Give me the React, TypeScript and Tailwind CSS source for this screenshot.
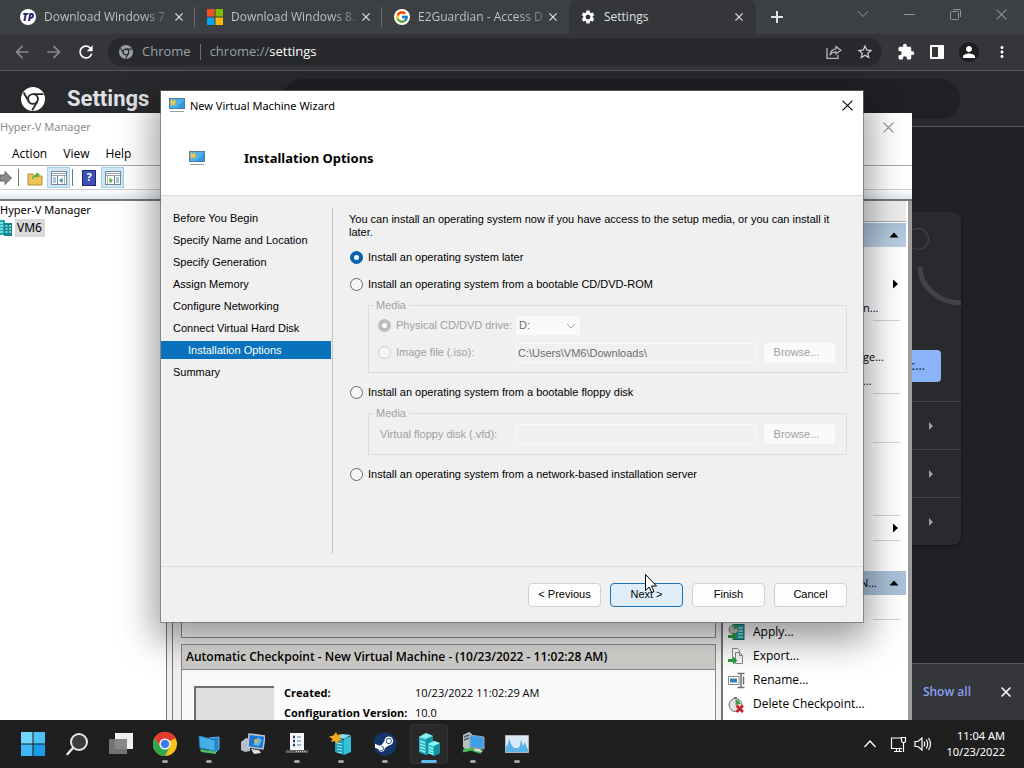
import React from "react";
import { FcGoogle } from "react-icons/fc";
import { FaSteam } from "react-icons/fa";
import {
  MdArrowBack,
  MdArrowForward,
  MdExtension,
  MdMoreVert,
  MdPerson,
  MdRefresh,
  MdSettings,
  MdStarBorder,
} from "react-icons/md";

type IconProps = { className?: string };

const Cross = ({ className }: IconProps) => (
  <svg viewBox="0 0 10 10" className={className} fill="none" stroke="currentColor" aria-hidden="true">
    <path d="M0.5 0.5 9.5 9.5M9.5 0.5 0.5 9.5" />
  </svg>
);

const ChromeMono = ({ className }: IconProps) => (
  <svg viewBox="0 0 24 24" className={className} aria-hidden="true">
    <circle cx="12" cy="12" r="12" fill="currentColor" />
    <circle cx="12" cy="12" r="4.9" fill="none" stroke="#292a2d" strokeWidth="1.9" />
    <path d="M12 7.1H22.4M7.8 14.5 2.6 5.6M16.2 14.5 11.2 23.4" stroke="#292a2d" strokeWidth="1.9" fill="none" />
  </svg>
);

const ChromeColor = ({ className }: IconProps) => (
  <svg viewBox="0 0 24 24" className={className} aria-hidden="true">
    <circle cx="12" cy="12" r="12" fill="#fbc116" />
    <path d="M12 12 1.6 6A12 12 0 0 1 22.4 6Z" fill="#e33b2e" />
    <path d="M12 6.5H22.7A12 12 0 0 0 1.6 6L7.2 14.7Z" fill="#e33b2e" />
    <path d="M1.6 6A12 12 0 0 0 12 24L16.8 14.8 12 12 7.2 14.8Z" fill="#2da94f" />
    <circle cx="12" cy="12" r="5.6" fill="#fff" />
    <circle cx="12" cy="12" r="4.3" fill="#3a7cec" />
  </svg>
);

const MonitorIcon = ({ className }: IconProps) => (
  <svg viewBox="0 0 16 15" className={className} aria-hidden="true">
    <rect x="0.5" y="0.5" width="15" height="10" fill="#4bb0ec" stroke="#4b7ea0" />
    <path d="M8 10 15 2V10Z" fill="#2f98e0" />
    <path d="M2 1 4 3 6 1 6 3.5 8 4 6 5.5 6.5 8 4 6.5 1.5 8 2 5 0.5 3.5 2 3.2Z" fill="#f3c544" />
    <path d="M1 13.5H15" stroke="#9aa3a8" />
  </svg>
);

const ShareIcon = ({ className }: IconProps) => (
  <svg viewBox="0 0 16 16" className={className} fill="none" stroke="currentColor" strokeWidth="1.3" aria-hidden="true">
    <path d="M1 4V14.3H12V11" />
    <path d="M10 2.5 14.8 6.3 10 10V7.8C7.500 7.700 5.300 8.800 4 11.300 4.300 7.500 6.500 5.100 10 4.800Z" />
  </svg>
);

const tabs = [
  { title: "Download Windows 7", icon: "tp" },
  { title: "Download Windows 8.", icon: "ms" },
  { title: "E2Guardian - Access D", icon: "google" },
];

const TabIcon = ({ kind }: { kind: string }) => {
  if (kind === "tp")
    return (
      <span className="flex size-4 shrink-0 items-center justify-center rounded-full bg-white text-[10px] font-black italic text-[#1d2470]">
        TP
      </span>
    );
  if (kind === "ms")
    return (
      <svg viewBox="0 0 16 16" className="size-4 shrink-0" aria-hidden="true">
        <path d="M0 0H7.500V7.500H0Z" fill="#f25022" />
        <path d="M8.500 0H16V7.500H8.500Z" fill="#7fba00" />
        <path d="M0 8.500H7.500V16H0Z" fill="#00a4ef" />
        <path d="M8.500 8.500H16V16H8.500Z" fill="#ffb900" />
      </svg>
    );
  return (
    <span className="flex size-4 shrink-0 items-center justify-center rounded-full bg-white">
      <FcGoogle className="size-3.5" />
    </span>
  );
};

function Browser() {
  return (
    <section aria-label="Browser" className="absolute inset-0 flex flex-col bg-[#202124] font-['Open_Sans',sans-serif] text-[#dfe1e5]">
      <div className="flex h-[34px] shrink-0 items-stretch bg-[#3c4043] pl-2 text-[12px]">
        {tabs.map((t) => (
          <div key={t.title} className="flex w-[187px] items-center">
            <div className="flex min-w-0 flex-1 items-center gap-2 pl-3">
              <TabIcon kind={t.icon} />
              <span className="whitespace-nowrap bg-[linear-gradient(to_right,#c5c8cc_80%,#6b6f74)] bg-clip-text text-transparent">
                {t.title}
              </span>
            </div>
            <button aria-label="Close tab" className="mr-[9px] p-0.5">
              <Cross className="size-2 stroke-[1.500]" />
            </button>
            <span className={t.icon === "google" ? "h-5 w-px" : "h-5 w-px bg-[#6b6f74]"} />
          </div>
        ))}
        <div className="flex w-[187px] items-center rounded-t-lg bg-[#35363a] pl-[11px]">
          <MdSettings className="mr-2 size-4 text-white" />
          <span className="flex-1">Settings</span>
          <button aria-label="Close tab" className="mr-[11px] p-0.5">
            <Cross className="size-2 stroke-[1.500]" />
          </button>
        </div>
        <button aria-label="New tab" className="flex w-[42px] items-center justify-center">
          <svg viewBox="0 0 12 12" className="size-3" stroke="currentColor" strokeWidth="2" aria-hidden="true">
            <path d="M6 0V12M0 6H12" />
          </svg>
        </button>
        <div className="ml-auto flex h-7 text-[#8f9397]">
          <button aria-label="Search tabs" className="flex w-[46px] items-center justify-center">
            <svg viewBox="0 0 12 8" className="w-3" fill="none" stroke="currentColor" aria-hidden="true">
              <path d="M1 1 6 6.500 11 1" />
            </svg>
          </button>
          <button aria-label="Minimize" className="flex w-[46px] items-center justify-center">
            <span className="h-px w-[11px] bg-[#8f9397]" />
          </button>
          <button aria-label="Restore" className="flex w-[46px] items-center justify-center">
            <svg viewBox="0 0 11 11" className="size-[11px]" fill="none" stroke="currentColor" aria-hidden="true">
              <rect x="0.500" y="2.500" width="8" height="8" rx="1" />
              <path d="M3 0.500H9A1.500 1.500 0 0 1 10.500 2V8" />
            </svg>
          </button>
          <button aria-label="Close" className="flex w-[46px] items-center justify-center">
            <Cross className="size-[11px]" />
          </button>
        </div>
      </div>
      <div className="flex h-9 shrink-0 items-center bg-[#35363a] pr-[13px]">
        <div className="flex w-[108px] items-center gap-3 pl-3">
          <button aria-label="Back"><MdArrowBack className="size-5 text-[#85888c]" /></button>
          <button aria-label="Forward"><MdArrowForward className="size-5 text-[#85888c]" /></button>
          <button aria-label="Reload"><MdRefresh className="size-5 text-white" /></button>
        </div>
        <div className="flex h-7 flex-1 items-center rounded-full bg-[#28292c] pl-[11px] pr-2 text-[13px] text-[#9aa0a6]">
          <ChromeMono className="size-3.5" />
          <span className="ml-[9px]">Chrome</span>
          <span className="mx-[9px] h-4 w-px bg-[#6b6f74]" />
          <span className="flex-1">
            chrome://<span className="text-white">settings</span>
          </span>
          <button aria-label="Share"><ShareIcon className="size-4 text-[#b4b8bc]" /></button>
          <button aria-label="Bookmark" className="ml-3.5"><MdStarBorder className="size-[18px] text-[#d0d3d7]" /></button>
        </div>
        <div className="ml-[15px] flex items-center gap-3.5 text-white">
          <button aria-label="Extensions"><MdExtension className="size-[18px]" /></button>
          <button aria-label="Side panel">
            <svg viewBox="0 0 16 16" className="size-4" aria-hidden="true">
              <path d="M1 1H15V15H1ZM3 3V13H9V3Z" fill="currentColor" fillRule="evenodd" />
            </svg>
          </button>
          <button aria-label="Profile" className="flex size-5 items-center justify-center rounded-full bg-[#1d1e20]">
            <MdPerson className="size-[18px]" />
          </button>
          <button aria-label="Menu"><MdMoreVert className="size-[18px]" /></button>
        </div>
      </div>
      <header className="flex h-[57px] shrink-0 items-center border-y border-[#56585b] bg-[#292a2d] pl-[21px] pr-16">
        <ChromeMono className="size-6 text-white" />
        <h1 className="ml-[22px] w-[216px] font-['Roboto',sans-serif] text-[22px] font-bold">Settings</h1>
        <div className="h-10 flex-1 rounded-full bg-[#202124]" />
      </header>
      <main className="flex flex-1 flex-col items-end pr-[63px] pt-[85px]">
        <div className="w-80 rounded-lg bg-[#292a2d] shadow-[0_1px_3px_rgba(0,0,0,0.5)]">
          <div className="flex h-[189px] flex-col items-end overflow-hidden">
            <svg viewBox="0 0 50 100" className="h-[100px] w-[50px] shrink-0" fill="none" aria-hidden="true">
              <circle cx="7" cy="27" r="10.500" stroke="#4b4c4f" strokeWidth="1" />
              <path d="M9 55A42 36 0 0 0 50 91" stroke="#414345" strokeWidth="5" />
            </svg>
            <button className="mr-5 mt-[38px] h-8 w-24 shrink-0 rounded bg-[#8ab4f8] pr-4 text-right text-[12px] font-semibold text-[#28406b]">c...</button>
          </div>
          {["passwords", "browsing", "extensions"].map((k) => (
            <div key={k} className="flex h-12 items-center justify-end border-t border-[#46474a] pr-7">
              <svg viewBox="0 0 4 8" className="h-2 w-1" fill="#9aa0a6" aria-hidden="true">
                <path d="M0 0 4 4 0 8Z" />
              </svg>
            </div>
          ))}
        </div>
      </main>
      <footer className="flex h-[57px] shrink-0 items-center justify-end border-t border-[#56585b] bg-[#35363a] pr-[13px]">
        <a href="#downloads" className="text-[12px] font-semibold text-[#8a9ff0]">Show all</a>
        <button aria-label="Close downloads" className="ml-[30px]"><Cross className="size-[10px] stroke-[1.500] text-white" /></button>
      </footer>
    </section>
  );
}

const PaneIcon = ({ flip }: { flip?: boolean }) => (
  <svg viewBox="0 0 16 14" className={flip ? "h-3.5 w-4 -scale-x-100" : "h-3.5 w-4"} fill="none" aria-hidden="true">
    <rect x="0.500" y="0.500" width="15" height="13" fill="#fff" stroke="#7b8791" />
    <path d="M1 2.500H15M1 4.500H15" stroke="#97a3ad" />
    <path d="M6.500 5V13M2 7H5M2 9H5M2 11H5" stroke="#5b86a8" />
    <path d="M11.500 6.500V12.500L8 9.500Z" fill={flip ? "#5cae2c" : "#4d8aa0"} />
    <path d="M13.500 5V13" stroke="#a9b4bc" />
  </svg>
);

const ServerIcon = ({ className }: IconProps) => (
  <svg viewBox="0 0 16 16" className={className} aria-hidden="true">
    <path d="M0 0H9V15H0Z" fill="#22a7ac" />
    <path d="M8 3H16V16H8Z" fill="#17858e" />
    <path d="M1 3H7M1 6H7M1 9H7M1 12H7M9.500 6H11.500M13 6H15M9.500 9H11.500M13 9H15M9.500 12H11.500M13 12H15" stroke="#8ff0ee" strokeWidth="1.500" />
  </svg>
);

const Triangle = ({ dir }: { dir: "up" | "right" }) => (
  <svg viewBox="0 0 10 10" className="size-2.5" aria-hidden="true">
    <path d={dir === "up" ? "M0.500 7.500 5 2.500 9.500 7.500Z" : "M3 0.500 8 5 3 9.500Z"} fill="#000" />
  </svg>
);

const GreenArrow = () => <path d="M0 11H5V8.500L9.500 12.500 5 16.500V14H0Z" fill="#27a03c" />;

const ActionIcon = ({ kind }: { kind: string }) => (
  <svg viewBox="0 0 17 17" className="size-[17px]" fill="none" aria-hidden="true">
    {kind === "apply" && (
      <>
        <rect x="5" y="0.500" width="11" height="15" fill="#1c9aa0" stroke="#157078" />
        <path d="M10 4H15M10 7H15M10 10H15M10 13H15" stroke="#8fe4e4" strokeWidth="1.500" />
        <circle cx="5.500" cy="5.500" r="4.500" fill="#c4c9c6" stroke="#777" />
        <path d="M5.500 5.500V1A4.500 4.500 0 0 1 9.500 4.500Z" fill="#39a14b" />
        <GreenArrow />
      </>
    )}
    {kind === "export" && (
      <>
        <path d="M4.500 12V0.500H9.500L11.500 2.500V5" stroke="#8a8a8a" />
        <path d="M7.500 4.500H11.500L14.500 7.500V15.500H7.500Z" fill="#f7f7f7" stroke="#8a8a8a" />
        <path d="M11.500 4.500V7.500H14.500" stroke="#8a8a8a" />
        <GreenArrow />
      </>
    )}
    {kind === "rename" && (
      <>
        <path d="M0.500 4.500H11V12.500H0.500Z" fill="#fff" stroke="#7d8a94" />
        <path d="M2 6.500H9V10.500H2Z" fill="#3580b8" />
        <path d="M13 1.500V15.500M9.500 1.500H16.500M9.500 15.500H16.500M15.500 4.500V12.500" stroke="#6f6f6f" strokeWidth="1.500" />
      </>
    )}
    {kind === "delete" && (
      <>
        <circle cx="7.500" cy="9" r="6.500" fill="#e2e2e2" stroke="#6e6e6e" />
        <path d="M6 1H9V3H6Z" fill="#777" />
        <path d="M7.500 9V3.500A5.500 5.500 0 0 1 12.500 8Z" fill="#39a14b" />
        <path d="M8.500 9.500 15 16M15 9.500 8.500 16" stroke="#c41e24" strokeWidth="2.500" />
      </>
    )}
  </svg>
);

const actions = [
  { kind: "apply", label: "Apply..." },
  { kind: "export", label: "Export..." },
  { kind: "rename", label: "Rename..." },
  { kind: "delete", label: "Delete Checkpoint..." },
];

const Rule = () => <div className="ml-[150px] mr-1.5 h-px shrink-0 bg-[#d4d4d4]" />;

const Fragment = ({ text, arrow }: { text?: string; arrow?: boolean }) => (
  <div className="flex h-6 shrink-0 items-center pl-[140px] pr-1.5 text-[11px]">
    <span className="flex-1">{text}</span>
    {arrow && <Triangle dir="right" />}
  </div>
);

function HyperV() {
  return (
    <section
      aria-label="Hyper-V Manager"
      className="absolute bottom-0 left-0 top-[113px] flex w-[912px] flex-col overflow-hidden bg-white font-['Noto_Sans',sans-serif] text-[11px] text-black"
    >
      <div className="flex h-[29px] shrink-0 items-center justify-between pr-[18px] text-[#8c8c8c]">
        <span>Hyper-V Manager</span>
        <button aria-label="Close"><Cross className="size-[11px]" /></button>
      </div>
      <nav className="flex h-6 shrink-0 items-center gap-4 border-b border-[#a8a8a8] pl-3 font-['Open_Sans',sans-serif] text-[12px]">
        <button>Action</button>
        <button>View</button>
        <button>Help</button>
      </nav>
      <div className="flex h-6 shrink-0 items-center border-b border-[#c9ccd0]">
        <svg viewBox="0 0 12 14" className="h-3.5 w-3" aria-hidden="true">
          <path d="M0 4H5V0.500L11.500 7 5 13.500V10H0Z" fill="#8a8a8a" stroke="#666" />
        </svg>
        <span className="ml-1.5 h-[17px] w-px bg-[#777]" />
        <button aria-label="Up" className="ml-2">
          <svg viewBox="0 0 16 16" className="size-4" aria-hidden="true">
            <path d="M1 4H6L8 6H15V15H1Z" fill="#ecc458" stroke="#b58f33" />
            <path d="M5 10C5 6 7 5 9 4.500V2.500L13 4.500 9 8V6.500C7 7 6 8 5 10Z" fill="#54a93a" />
          </svg>
        </button>
        <button aria-label="Tree" className="ml-1 flex h-[21px] w-[23px] items-center justify-center border border-[#9fd0f0] bg-[#cfe6f7]"><PaneIcon /></button>
        <span className="ml-0.5 h-[17px] w-px bg-[#777]" />
        <button aria-label="Help" className="ml-[9px] flex h-4 w-3.5 items-center justify-center border border-[#1c2a73] bg-[#3d50b4] font-bold text-white">?</button>
        <button aria-label="Actions" className="ml-[5px] flex h-[21px] w-[23px] items-center justify-center border border-[#9fd0f0] bg-[#cfe6f7]"><PaneIcon flip /></button>
      </div>
      <div className="h-[9px] shrink-0 bg-[linear-gradient(#fff,#dfe6ee)]" />
      <div className="flex min-h-0 flex-1 border-t-2 border-[#75777c] bg-[#f0f0f0]">
        <div className="w-[167px] shrink-0 border-r border-[#777] bg-white">
          <div className="flex h-[18px] items-center">Hyper-V Manager</div>
          <div className="flex h-[18px] items-center text-[12px]">
            <ServerIcon className="-ml-1 mr-[3px] size-4" />
            <span className="flex h-[18px] items-center bg-[#d9d9d9] pl-0.5 pr-[3px]">VM6</span>
          </div>
        </div>
        <div className="ml-[5px] flex min-w-0 flex-1 flex-col border-l border-[#777] px-2 pr-[5px]">
          <div className="h-[437px] shrink-0 border border-[#8b8b8b] bg-[#fafafa]" />
          <div className="mt-1.5 flex flex-1 flex-col border border-[#8b8b8b] bg-[#fafafa]">
            <h2 className="flex h-[25px] shrink-0 items-center border-b border-[#8b8b8b] bg-[linear-gradient(#e2e2e0,#c9c8c4)] pl-1 font-['Open_Sans',sans-serif] text-[12px] font-semibold">
              Automatic Checkpoint - New Virtual Machine - (10/23/2022 - 11:02:28 AM)
            </h2>
            <div className="flex min-h-0 flex-1 overflow-hidden pl-3 pt-4">
              <div className="w-20 shrink-0 border-l-2 border-t-2 border-[#6e6e6e] bg-[#dedede]" />
              <dl className="-mt-[3px] ml-2.5 grid h-10 grid-cols-[131px_auto] font-['Open_Sans',sans-serif] leading-5">
                <dt className="font-bold">Created:</dt>
                <dd>10/23/2022 11:02:29 AM</dd>
                <dt className="font-bold">Configuration Version:</dt>
                <dd>10.0</dd>
              </dl>
            </div>
          </div>
        </div>
        <aside className="flex w-[187px] shrink-0 flex-col border-l-2 border-[#777] bg-white pr-0.5 font-['Open_Sans',sans-serif] text-[12px]">
          <div className="h-[21px] shrink-0 border-b border-[#aaa] bg-[#ececec]" />
          <div className="mt-px flex h-6 shrink-0 items-center justify-end bg-[linear-gradient(#a9c1d9,#bccfe2)] pr-[7px]"><Triangle dir="up" /></div>
          <div className="h-px" />
          <Fragment />
          <Fragment arrow />
          <Fragment text="n..." />
          <Rule />
          <Fragment />
          <Fragment text="ge..." />
          <Fragment text="..." />
          <Rule />
          <Fragment />
          <Fragment />
          <Rule />
          <Fragment />
          <Fragment />
          <Fragment />
          <Rule />
          <Fragment arrow />
          <Rule />
          <div className="h-[30px] shrink-0" />
          <div className="flex h-6 shrink-0 items-center justify-end gap-3 bg-[#a9c1d9] pr-[7px] text-[11px]">N...<Triangle dir="up" /></div>
          <Fragment />
          <Rule />
          {actions.map((a) => (
            <button key={a.kind} className="flex h-6 shrink-0 items-center gap-2 pl-[5px] text-left">
              <ActionIcon kind={a.kind} />
              {a.label}
            </button>
          ))}
        </aside>
        <div className="w-1 shrink-0 bg-[#9e9e9e]" />
      </div>
    </section>
  );
}

const steps = [
  "Before You Begin",
  "Specify Name and Location",
  "Specify Generation",
  "Assign Memory",
  "Configure Networking",
  "Connect Virtual Hard Disk",
  "Installation Options",
  "Summary",
];

const Radio = ({ id, name, children, checked, disabled }: { id: string; name: string; children: React.ReactNode; checked?: boolean; disabled?: boolean }) => (
  <div className={disabled ? "flex h-[27px] items-center text-[#a0a0a0]" : "flex h-[27px] items-center pl-px"}>
    <input
      id={id}
      type="radio"
      name={name}
      defaultChecked={checked}
      disabled={disabled}
      className="mr-[5px] size-[13px] shrink-0 appearance-none rounded-full border border-[#6a6a6a] bg-[#f6f6f6] checked:border-4 checked:border-[#0a61ad] checked:bg-white disabled:border-[#cfcfcf] disabled:checked:border-[#bdbdbd]"
    />
    <label htmlFor={id}>{children}</label>
  </div>
);

const Browse = () => (
  <button disabled className="ml-2 h-5 w-[71px] shrink-0 rounded-sm bg-[#fafafa] pr-1.5 text-[#a0a0a0]">Browse...</button>
);

function Wizard() {
  return (
    <section
      role="dialog"
      aria-label="New Virtual Machine Wizard"
      className="absolute left-[161px] top-[91px] flex h-[531px] w-[702px] flex-col bg-[#f0f0f0] font-['Liberation_Sans',sans-serif] text-[11px] leading-[13px] text-black shadow-[0_0_0_1px_rgba(110,110,110,0.7),0_12px_34px_6px_rgba(0,0,0,0.4)]"
    >
      <header className="h-[105px] shrink-0 border-b border-[#dcdcdc] bg-white">
        <div className="flex h-7 items-center pl-2 pr-2.5 font-['Noto_Sans',sans-serif]">
          <MonitorIcon className="w-4" />
          <span className="ml-[5px] flex-1">New Virtual Machine Wizard</span>
          <button aria-label="Close"><Cross className="size-[11px]" /></button>
        </div>
        <div className="flex h-[78px] items-center pl-7">
          <MonitorIcon className="w-4" />
          <h2 className="ml-[39px] font-['Noto_Sans',sans-serif] text-[13px] font-bold">Installation Options</h2>
        </div>
      </header>
      <div className="flex flex-1">
        <ol className="w-[170px] shrink-0 pt-[11px]">
          {steps.map((s) => (
            <li key={s} className="flex h-[22px] items-center">
              <a
                href="#step"
                className={
                  s === "Installation Options"
                    ? "flex h-[18px] flex-1 items-center bg-[#0873bc] pl-[27px] text-white"
                    : "flex h-[18px] flex-1 items-center pl-3"
                }
              >
                {s}
              </a>
            </li>
          ))}
        </ol>
        <div className="my-3 ml-px w-px bg-[#c4c4c4]" />
        <form className="flex-1 pl-4 pr-4 pt-[17px]">
          <p className="mb-[5px]">
            You can install an operating system now if you have access to the setup media, or you can install it later.
          </p>
          <Radio id="later" name="source" checked>Install an operating system later</Radio>
          <Radio id="cd" name="source">Install an operating system from a bootable CD/DVD-ROM</Radio>
          <fieldset disabled className="ml-[19px] border border-[#dcdcdc] pb-1.5 pl-[9px] pr-[11px] text-[#a0a0a0]">
            <legend className="-ml-[5px] px-[3px] leading-[14px]">Media</legend>
            <div className="flex items-center">
              <div className="w-[138px]"><Radio id="drive" name="media" checked disabled>Physical CD/DVD drive:</Radio></div>
              <div className="relative flex items-center">
                <select aria-label="Drive" disabled className="h-[19px] w-16 appearance-none bg-[#fafafa] px-[3px] text-[#6d6d6d]">
                  <option>D:</option>
                </select>
                <svg viewBox="0 0 10 6" className="absolute right-1 w-2.5" fill="none" stroke="#a8a8a8" aria-hidden="true">
                  <path d="M1 1 5 5 9 1" />
                </svg>
              </div>
            </div>
            <div className="flex items-center">
              <div className="w-[138px] shrink-0"><Radio id="iso" name="media" disabled>Image file (.iso):</Radio></div>
              <input aria-label="Image file path" disabled defaultValue="C:\Users\VM6\Downloads\" className="h-5 min-w-0 flex-1 border border-[#fafafa] px-px text-[#6d6d6d]" />
              <Browse />
            </div>
          </fieldset>
          <div className="mt-1.5">
            <Radio id="floppy" name="source">Install an operating system from a bootable floppy disk</Radio>
          </div>
          <fieldset disabled className="ml-[19px] border border-[#dcdcdc] pb-1.5 pl-[9px] pr-[11px] text-[#a0a0a0]">
            <legend className="-ml-[5px] px-[3px] leading-[14px]">Media</legend>
            <div className="flex h-7 items-center">
              <label htmlFor="vfd" className="w-[138px] shrink-0 pl-0.5">Virtual floppy disk (.vfd):</label>
              <input id="vfd" disabled className="h-5 min-w-0 flex-1 border border-[#fafafa]" />
              <Browse />
            </div>
          </fieldset>
          <div className="mt-1.5">
            <Radio id="network" name="source">Install an operating system from a network-based installation server</Radio>
          </div>
        </form>
      </div>
      <footer className="flex h-14 shrink-0 items-center justify-end gap-[9px] border-t border-[#dcdcdc] pr-4">
        {["< Previous", "Next >", "Finish", "Cancel"].map((b) => (
          <button
            key={b}
            className={
              b === "Next >"
                ? "h-6 w-[73px] rounded border border-[#1a73b8] bg-[#e0eef9]"
                : "h-6 w-[73px] rounded border border-[#d0d0d0] bg-[#fdfdfd]"
            }
          >
            {b}
          </button>
        ))}
      </footer>
    </section>
  );
}

const TaskIcon = ({ kind }: { kind: string }) => {
  if (kind === "chrome") return <ChromeColor className="size-6" />;
  if (kind === "steam")
    return (
      <span className="flex size-6 items-center justify-center rounded-full bg-[radial-gradient(circle,#fff_60%,transparent_62%)]">
        <FaSteam className="size-6 text-[#12366a]" />
      </span>
    );
  return (
    <svg viewBox="0 0 24 24" className="size-6" fill="none" aria-hidden="true">
      {kind === "start" && (
        <>
          <path d="M0 0H11.500V11.500H0Z" fill="#72d6fb" />
          <path d="M12.500 0H24V11.500H12.500Z" fill="#4cc2f7" />
          <path d="M0 12.500H11.500V24H0Z" fill="#3fb7f4" />
          <path d="M12.500 12.500H24V24H12.500Z" fill="#1b9bea" />
        </>
      )}
      {kind === "search" && (
        <>
          <circle cx="14" cy="10" r="8" fill="#3c3c3c" stroke="#e6e6e6" strokeWidth="2" />
          <path d="M8 16 2.500 22" stroke="#e6e6e6" strokeWidth="2.500" strokeLinecap="round" />
        </>
      )}
      {kind === "tasks" && (
        <>
          <path d="M6 1H24V17H6Z" fill="#f0f0f0" />
          <path d="M0 7H18V22H0Z" fill="#7c7c7c" fillOpacity="0.900" />
        </>
      )}
      {kind === "screens" && (
        <>
          <path d="M12 6 22 5V17L19 20 12 18Z" fill="#2484c6" stroke="#5ab6ea" />
          <path d="M2 4 18 8V19L3 16Z" fill="#48aee8" stroke="#2b7fb8" />
          <path d="M3 17 19 20V22L4 20Z" fill="#50c060" />
        </>
      )}
      {kind === "desktop" && (
        <>
          <path d="M0 10 5 6 9 7V19L4 20 0 18Z" fill="#b9bec4" />
          <path d="M8 2 24 4 22 17 7 15Z" fill="#1b76cf" stroke="#b9c7d5" strokeWidth="1.500" />
          <path d="M12 13 17 5 21 8 18 14Z" fill="#5cb8f2" />
          <circle cx="15" cy="9" r="2" fill="#f2b33d" />
          <path d="M10 17 18 18 20 21 13 22Z" fill="#d9dde2" />
        </>
      )}
      {kind === "list" && (
        <>
          <path d="M5 1H19V19H5Z" fill="#f4f6f8" />
          <path d="M8 5H10M8 9H10M8 13H10" stroke="#2c3e57" strokeWidth="2.500" />
          <path d="M12 5H16M12 9H16M12 13H16" stroke="#7fa8c9" strokeWidth="1.500" />
          <path d="M1 18H23V21H1Z" fill="#5d5f61" />
          <path d="M11 19.500H21" stroke="#c8c8c8" strokeDasharray="1 1" />
        </>
      )}
      {kind === "newserver" && (
        <>
          <path d="M6 5 13 2 22 3 15 7Z" fill="#7be0ec" />
          <path d="M6 6 15 8V23L6 20Z" fill="#1d9fba" />
          <path d="M15 7 22 4V20L15 23Z" fill="#35c1d8" />
          <path d="M8 11 13 12M8 14 13 15M8 17 13 18M8 20 13 21" stroke="#a8ecf4" />
          <path d="M7 0 8.500 3 12 2 10.500 5.500 13 8 9.500 8.500 8 12 5.500 9 2 10 3.500 7 0 4.500 4.500 3.500Z" fill="#f5a81c" />
        </>
      )}
      {kind === "hyperv" && (
        <>
          <path d="M2 5 9 1 16 4V20L9 23 2 20Z" fill="#26b6c4" />
          <path d="M2 5 9 1 16 4 9 7Z" fill="#8ceff0" />
          <path d="M9 7 16 4V20L9 23Z" fill="#10949f" />
          <path d="M11 12 17 9 23 11V21L17 24 11 21Z" fill="#32c8d3" />
          <path d="M11 12 17 9 23 11 17 14Z" fill="#9af4f3" />
          <path d="M17 14 23 11V21L17 24Z" fill="#11939f" />
          <path d="M3 9 8 11M3 12 8 14M3 15 8 17M3 18 8 20M12 15 16 17M12 18 16 20M12 21 16 22" stroke="#d2ffff" />
        </>
      )}
      {kind === "network" && (
        <>
          <path d="M2 3 8 0 11 2V15L5 18 2 15Z" fill="#b9c0c5" />
          <path d="M3 5 8 3M3 8 8 6" stroke="#51585d" strokeWidth="1.500" />
          <path d="M9 3 23 5V17L9 15Z" fill="#3e9fe3" stroke="#8fa7b8" />
          <path d="M2 19 10 17 19 20 21 18" stroke="#43bd4e" strokeWidth="3" />
          <path d="M13 16 19 17 21 20 14 19Z" fill="#d6dadd" />
        </>
      )}
      {kind === "chart" && (
        <>
          <path d="M0.500 3.500H23.500V20.500H0.500Z" fill="#dce9f4" stroke="#aab7c2" />
          <path d="M1 19V15L3 12 4 6 6 12 9 16 13 16 15 14 16 7 18 14 20 10 22 16 23 17V20H1Z" fill="#5bb4e5" />
        </>
      )}
    </svg>
  );
};

const tasks = [
  { kind: "start", open: false },
  { kind: "search", open: false },
  { kind: "tasks", open: false },
  { kind: "chrome", open: true },
  { kind: "screens", open: true },
  { kind: "desktop", open: false },
  { kind: "list", open: true },
  { kind: "newserver", open: true },
  { kind: "steam", open: true },
  { kind: "hyperv", open: true },
  { kind: "network", open: true },
  { kind: "chart", open: true },
];

function Taskbar() {
  return (
    <footer className="flex h-12 shrink-0 items-center bg-[#1f1f1f] pl-[11px] pr-[19px] font-['Noto_Sans',sans-serif] text-[11px] text-white">
      {tasks.map((t) => (
        <button key={t.kind} aria-label={t.kind} className="flex w-11 flex-col items-center">
          <span
            className={
              t.kind === "hyperv"
                ? "flex h-10 w-[38px] flex-col items-center rounded border border-[#333] bg-[#292929] pt-[7px]"
                : "flex h-10 w-[38px] flex-col items-center pt-2"
            }
          >
            <TaskIcon kind={t.kind} />
            {t.kind === "hyperv" ? (
              <span className="mt-1 h-[3px] w-4 rounded-full bg-[#5bbcec]" />
            ) : (
              t.open && <span className="mt-1 h-[3px] w-1.5 rounded-full bg-[#a0a0a0]" />
            )}
          </span>
        </button>
      ))}
      <div className="ml-auto flex items-center">
        <button aria-label="Hidden icons">
          <svg viewBox="0 0 12 8" className="w-3" fill="none" stroke="currentColor" strokeWidth="1.300" aria-hidden="true">
            <path d="M0.500 7 6 1 11.500 7" />
          </svg>
        </button>
        <svg viewBox="0 0 17 17" className="ml-3.5 size-[17px]" fill="none" stroke="currentColor" strokeWidth="1.200" aria-hidden="true">
          <path d="M11 2H1.500V12.500H12M4 15.500H12M6.500 12.500V15.500M9.500 12.500V15.500" />
          <path d="M11.500 1.500H15.500V5L14.500 6.500H12.500L11.500 5ZM13.500 6.500V16" />
        </svg>
        <svg viewBox="0 0 18 16" className="ml-[7px] h-4 w-[18px]" fill="none" stroke="currentColor" strokeWidth="1.200" aria-hidden="true">
          <path d="M1 5.500H4L8 2V14L4 10.500H1Z" />
          <path d="M10 5.500Q11.500 8 10 10.500M12.300 3.500Q15 8 12.300 12.500M14.500 2Q18.500 8 14.500 14" />
        </svg>
        <time className="ml-3.5 text-right leading-4">
          11:04 AM
          <br />
          10/23/2022
        </time>
      </div>
    </footer>
  );
}

export default function App() {
  return (
    <div className="flex h-screen flex-col overflow-hidden">
      <div className="relative min-h-0 flex-1 overflow-hidden">
        <Browser />
        <HyperV />
        <Wizard />
        <svg viewBox="0 0 12 19" className="absolute left-[645px] top-[574px] h-[19px] w-3" aria-hidden="true">
          <path d="M0.500 0.500V16.500L4.200 13 6.800 18.500 9 17.500 6.500 12H11.500Z" fill="#fff" stroke="#000" />
        </svg>
      </div>
      <Taskbar />
    </div>
  );
}
